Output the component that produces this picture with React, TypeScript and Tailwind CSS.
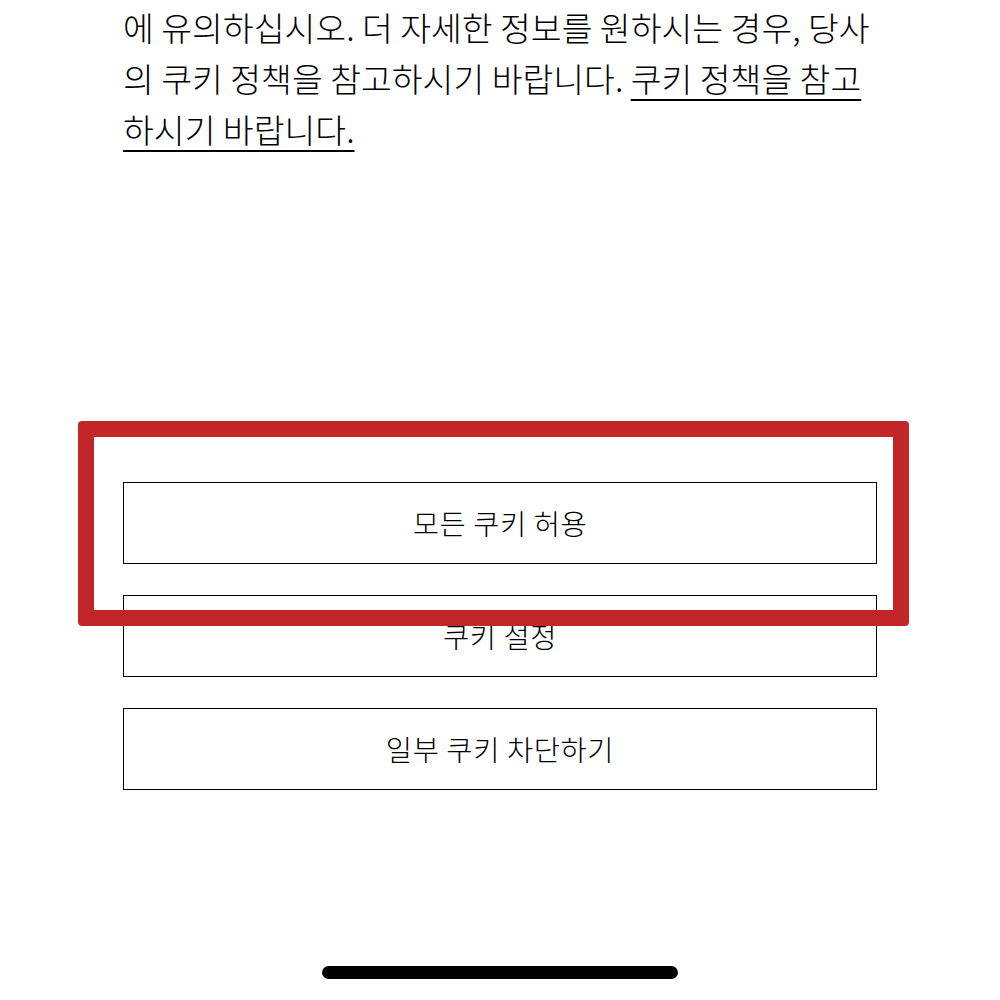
import { FC } from "react";

const font = { fontFamily: '"Noto Sans CJK KR", "Noto Sans", sans-serif' };

const buttons = ["모든 쿠키 허용", "쿠키 설정", "일부 쿠키 차단하기"];

const App: FC = () => {
    return (
        <div className="relative w-[1000px] h-[1000px] bg-white text-black overflow-hidden" style={font}>
            {/* 본문 텍스트 */}
            <div className="pl-[123px] pt-[1px] text-[33.5px] leading-[51px] font-light whitespace-nowrap">
                <div>에 유의하십시오. 더 자세한 정보를 원하시는 경우, 당사</div>
                <div>
                    의 쿠키 정책을 참고하시기 바랍니다.{" "}
                    <span className="underline decoration-[2px] underline-offset-[7px]">쿠키 정책을 참고</span>
                </div>
                <div>
                    <span className="underline decoration-[2px] underline-offset-[7px]">하시기 바랍니다.</span>
                </div>
            </div>

            {/* 버튼 */}
            <div className="mt-[328px] ml-[123px] w-[754px] flex flex-col gap-[31px]">
                {buttons.map((label) => (
                    <button
                        key={label}
                        className="h-[82px] w-full border border-black bg-white flex items-center justify-center text-[28.5px] font-light tracking-[0.6px]"
                    >
                        {label}
                    </button>
                ))}
            </div>

            {/* 강조 표시 */}
            <div className="absolute left-[78px] top-[421px] w-[831px] h-[205px] border-[16px] border-[#c22628] rounded-[4px]" />

            {/* 홈 인디케이터 */}
            <div className="absolute left-[322px] top-[966px] w-[356px] h-[13px] rounded-full bg-black" />
        </div>
    );
};

export default App;
